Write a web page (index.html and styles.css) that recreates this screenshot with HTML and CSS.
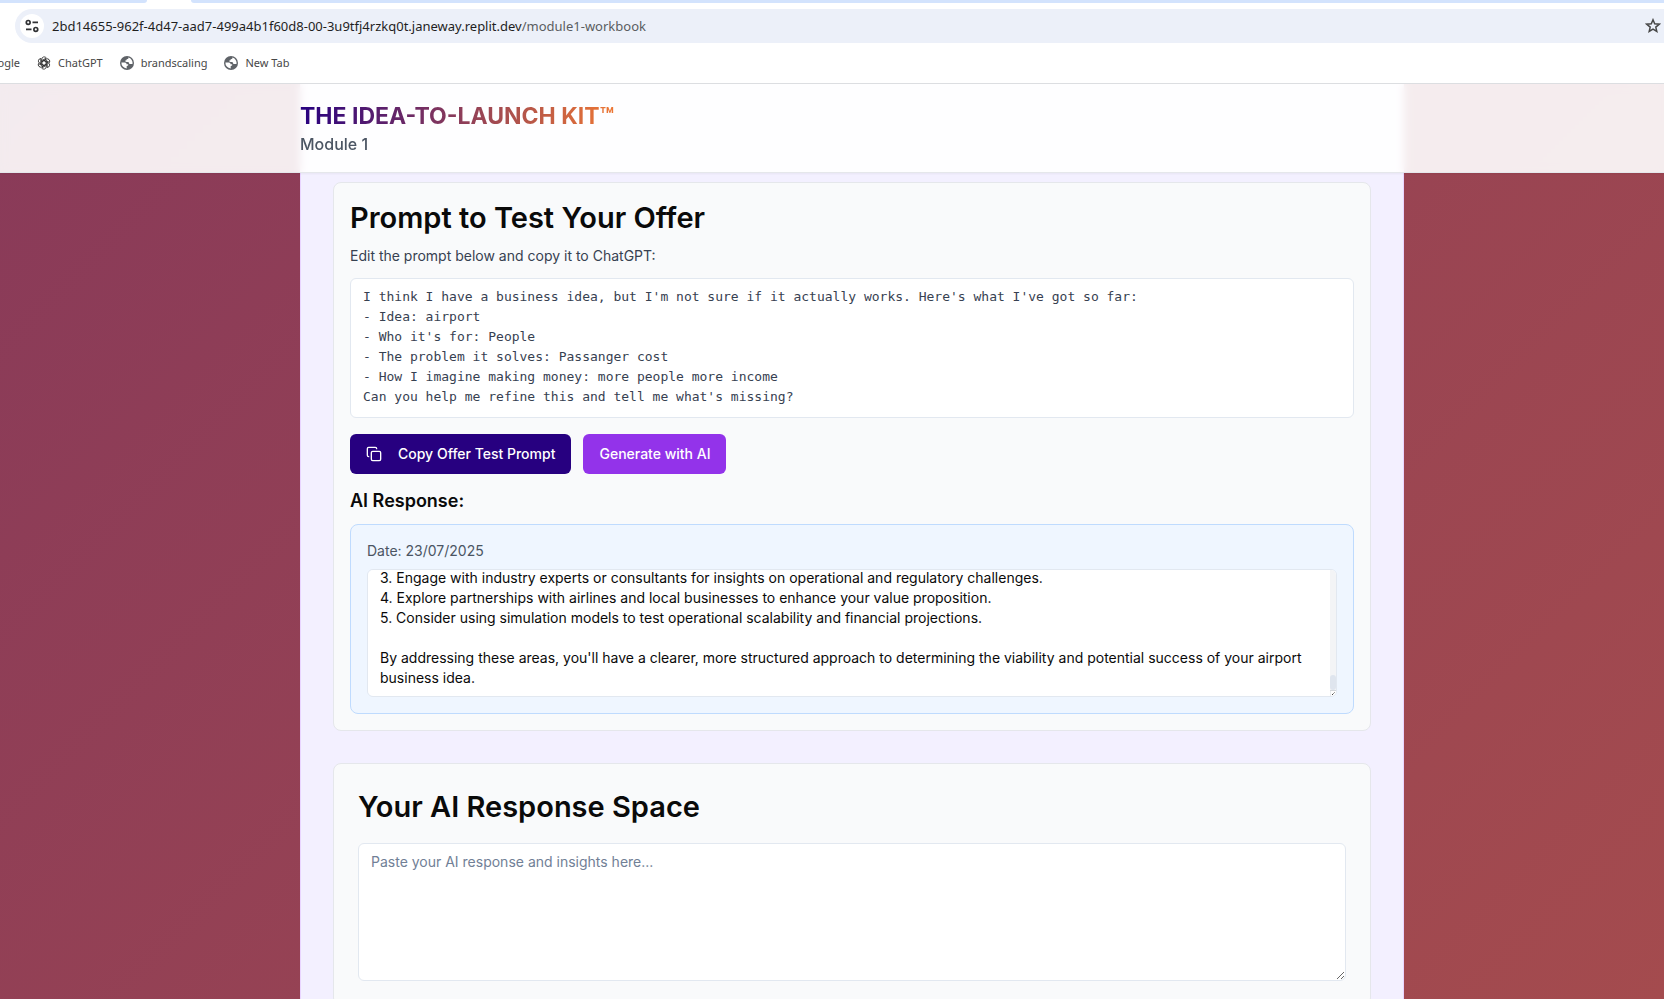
FILE: index.html
```html
<!DOCTYPE html>
<html lang="en">
<head>
<meta charset="utf-8">
<meta name="viewport" content="width=device-width, initial-scale=1">
<title>Module 1 Workbook</title>
<link rel="stylesheet" href="styles.css">
</head>
<body>
<div class="browser">
  <div class="tab-strip"><span class="tab-left"></span><span class="tab-right"></span></div>
  <div class="toolbar">
    <div class="omnibox">
      <button class="site-info" type="button" aria-label="View site information">
        <svg width="14" height="14" viewBox="0 0 14 14" fill="none" stroke="#303134" stroke-width="1.7"><circle cx="3.2" cy="3.4" r="1.9"/><path d="M7.5 3.4H13M1 10.4h5.5"/><circle cx="10.8" cy="10.4" r="1.9"/></svg>
      </button>
      <p class="url">2bd14655-962f-4d47-aad7-499a4b1f60d8-00-3u9tfj4rzkq0t.janeway.replit.dev<span class="url-path">/module1-workbook</span></p>
      <button class="star" type="button" aria-label="Bookmark this tab">
        <svg width="16" height="16" viewBox="0 0 16 16" fill="none" stroke="#474747" stroke-width="1.5"><path d="M8 1.8l1.7 4 4.5.4-3.4 2.9 1 4.3L8 11.1l-3.8 2.3 1-4.3L1.8 6.200l4.500-.4z"/></svg>
      </button>
    </div>
  </div>
  <nav class="bookmarks" aria-label="Bookmarks">
    <a class="bookmark bookmark-cut" href="#">Google</a>
    <a class="bookmark" href="#">
      <svg width="14" height="14" viewBox="0 0 14 14" fill="none" stroke="#222" stroke-width="0.8"><path id="petal" d="M4.700 5.800V3.200a2.500 2.500 0 0 1 4.600-1.200L5 4.500v5"/><use href="#petal" transform="rotate(60 7 7)"/><use href="#petal" transform="rotate(120 7 7)"/><use href="#petal" transform="rotate(180 7 7)"/><use href="#petal" transform="rotate(240 7 7)"/><use href="#petal" transform="rotate(300 7 7)"/></svg>
      ChatGPT</a>
    <a class="bookmark" href="#">
      <svg width="14" height="14" viewBox="0 0 14 14"><circle cx="7" cy="7" r="7" fill="#5f6368"/><path d="M1.400 6.600h3.400c1.500 0 1.700.8 1.700 1.700h1.600c.5 1.300-.2 1.600-1.400 1.700v2.400A5.500 5.500 0 0 1 1.400 6.600zM8.300 1.600c.4 1-.2 1.500-1.600 1.600-.2 1.300-.8 1.200-1.500 1.500.2 1.300 1 1.200 3.300 1.200.6 1.600.8 2.100 2 2.100h2A5.500 5.500 0 0 0 8.300 1.600z" fill="#fff"/></svg>
      brandscaling</a>
    <a class="bookmark" href="#">
      <svg width="14" height="14" viewBox="0 0 14 14"><circle cx="7" cy="7" r="7" fill="#5f6368"/><path d="M1.400 6.600h3.400c1.500 0 1.700.8 1.700 1.700h1.600c.5 1.300-.2 1.600-1.400 1.700v2.400A5.500 5.500 0 0 1 1.400 6.600zM8.300 1.600c.4 1-.2 1.500-1.600 1.600-.2 1.300-.8 1.200-1.500 1.500.2 1.300 1 1.200 3.300 1.200.6 1.600.8 2.100 2 2.100h2A5.500 5.500 0 0 0 8.300 1.600z" fill="#fff"/></svg>
      New Tab</a>
  </nav>
</div>
<div class="page">
  <header class="page-header">
    <h1 class="brand">THE IDEA-TO-LAUNCH KIT™</h1>
    <p class="module">Module 1</p>
  </header>
  <main class="panel">
    <section class="card">
      <h2 class="card-title">Prompt to Test Your Offer</h2>
      <label class="hint" for="prompt">Edit the prompt below and copy it to ChatGPT:</label>
      <textarea class="field field-prompt" id="prompt" rows="6" spellcheck="false">I think I have a business idea, but I'm not sure if it actually works. Here's what I've got so far:
- Idea: airport
- Who it's for: People
- The problem it solves: Passanger cost
- How I imagine making money: more people more income
Can you help me refine this and tell me what's missing?</textarea>
      <div class="actions">
        <button class="btn btn-copy" type="button">
          <svg width="16" height="16" viewBox="0 0 24 24" fill="none" stroke="currentColor" stroke-width="2" stroke-linecap="round" stroke-linejoin="round"><rect width="14" height="14" x="8" y="8" rx="2"/><path d="M4 16c-1.100 0-2-.9-2-2V4c0-1.100.9-2 2-2h10c1.100 0 2 .9 2 2"/></svg>
          Copy Offer Test Prompt</button>
        <button class="btn btn-generate" type="button">Generate with AI</button>
      </div>
      <h3 class="response-title" id="response-title">AI Response:</h3>
      <div class="response">
        <p class="date">Date: 23/07/2025</p>
        <div class="scroll-area">
          <textarea class="field field-response" id="response" aria-labelledby="response-title" spellcheck="false">


3. Engage with industry experts or consultants for insights on operational and regulatory challenges.
4. Explore partnerships with airlines and local businesses to enhance your value proposition.
5. Consider using simulation models to test operational scalability and financial projections.

By addressing these areas, you'll have a clearer, more structured approach to determining the viability and potential success of your airport business idea.</textarea>
          <div class="scroll-track" aria-hidden="true">
            <span class="scroll-thumb"></span>
            <svg class="scroll-corner" width="6" height="6" viewBox="0 0 6 6"><path d="M0 0h6v6H0z" fill="#fff"/><path d="M0 6V.5h6" fill="none" stroke="#d4d7db"/><path d="M2 5l3-3" stroke="#444" stroke-dasharray="1.400 .6"/></svg>
          </div>
        </div>
      </div>
    </section>
    <section class="card card-roomy">
      <h2 class="card-title" id="space-title">Your AI Response Space</h2>
      <textarea class="field field-space" aria-labelledby="space-title" placeholder="Paste your AI response and insights here..."></textarea>
    </section>
  </main>
</div>
<script src="script.js"></script>
</body>
</html>
```
FILE: styles.css
```css
* { box-sizing: border-box; }
body {
  margin: 0;
  height: 100vh;
  display: flex;
  flex-direction: column;
  overflow: hidden;
  font-family: Inter, "Liberation Sans", sans-serif;
  font-size: 14px;
  line-height: 20px;
  color: #0a0a0a;
}
h1, h2, h3, p { margin: 0; }
button { border: 0; font: inherit; padding: 0; cursor: pointer; }
svg { display: block; flex: none; }

.browser {
  flex: none;
  background: #fff;
  border-bottom: 1px solid #dcdee1;
  font-family: "Noto Sans", "Open Sans", sans-serif;
}
.tab-strip { height: 3px; background: #fff; display: flex; gap: 44px; }
.tab-left { width: 147px; background: #d3e3fd; border-bottom-right-radius: 8px; }
.tab-right { flex: 1; background: #d3e3fd; border-bottom-left-radius: 8px; }
.toolbar { padding: 6px 0 0 15px; }
.omnibox {
  height: 34px;
  display: flex;
  align-items: center;
  gap: 8px;
  padding: 0 3px 0 5px;
  background: #ecf0f9;
  border-radius: 17px 0 0 17px;
}
.site-info {
  width: 24px;
  height: 24px;
  border-radius: 50%;
  background: #fff;
  display: grid;
  place-items: center;
}
.url { flex: 1; font-size: 13px; color: #1f1f1f; white-space: nowrap; }
.url-path { color: #5a5d61; }
.star { background: none; }
.bookmarks { height: 40px; display: flex; align-items: center; gap: 17px; font-size: 11px; }
.bookmark { display: flex; align-items: center; gap: 7px; color: #474747; text-decoration: none; }
.bookmark-cut { width: 20px; justify-content: flex-end; }

.page {
  flex: 1;
  min-height: 0;
  overflow: hidden;
  background: linear-gradient(135deg, #893a59, #a44b4e);
}
.page-header {
  position: relative;
  z-index: 1;
  height: 89px;
  padding: 16px 260px 0 300px;
  background: rgba(255, 255, 255, 0.9);
  backdrop-filter: blur(4px);
  border-bottom: 1px solid #e5e7eb;
  box-shadow: 0 1px 2px rgba(0, 0, 0, 0.05);
}
.brand {
  width: fit-content;
  font-size: 23px;
  line-height: 32px;
  font-weight: 700;
  color: transparent;
  background: linear-gradient(90deg, #270080, #ed7734);
  background-clip: text;
}
.module { font-size: 16px; line-height: 24px; font-weight: 500; color: #4b5563; }

.panel {
  margin: -89px 260px 0 300px;
  padding: 98px 32px 32px;
  background: #f3f0ff;
  border: 1px solid #e9d5ff;
  border-width: 0 1px;
  display: flex;
  flex-direction: column;
  gap: 32px;
}
.card {
  padding: 16px;
  background: #f9fafb;
  border: 1px solid #e5e7eb;
  border-radius: 8px;
}
.card-roomy { padding: 24px; }
.card-title { font-size: 29px; line-height: 38px; font-weight: 600; }
.hint { display: block; margin: 9px 0 12px; color: #374151; }
.field {
  display: block;
  width: 100%;
  margin: 0;
  padding: 8px 12px;
  background: #fff;
  border: 1px solid #e2e8f0;
  border-radius: 6px;
  font: inherit;
  color: inherit;
  outline: 0;
}
.field-prompt {
  height: 140px;
  resize: none;
  font-family: "DejaVu Sans Mono", "Liberation Mono", monospace;
  font-size: 13px;
  line-height: 20px;
  color: #374151;
}
.actions { display: flex; gap: 12px; margin: 16px 0 13px; }
.btn {
  height: 40px;
  padding: 0 16px;
  display: flex;
  align-items: center;
  gap: 16px;
  border-radius: 6px;
  font-weight: 500;
  color: #fff;
}
.btn-copy { background: #270080; }
.btn-generate { background: #9333ea; }
.response-title { font-size: 18px; line-height: 28px; font-weight: 600; margin-bottom: 9px; }
.response {
  padding: 16px;
  background: #eff6ff;
  border: 1px solid #bfdbfe;
  border-radius: 8px;
}
.date { color: #4b5563; margin-bottom: 8px; }
.scroll-area { position: relative; }
.field-response { height: 128px; padding-right: 18px; resize: none; }
.scroll-track {
  position: absolute;
  top: 1px;
  right: 1px;
  bottom: 1px;
  width: 6px;
  display: flex;
  flex-direction: column;
  justify-content: flex-end;
  background: #f3f4f6;
  border-radius: 0 5px 5px 0;
  overflow: hidden;
}
.scroll-thumb { height: 15px; background: #dfe5ee; border-radius: 3px; }
.field-space { height: 138px; margin-top: 17px; resize: vertical; }
.field-space::placeholder { color: #718096; }
```
FILE: script.js
```js
const response = document.getElementById('response');
response.scrollTop = response.scrollHeight;
```
